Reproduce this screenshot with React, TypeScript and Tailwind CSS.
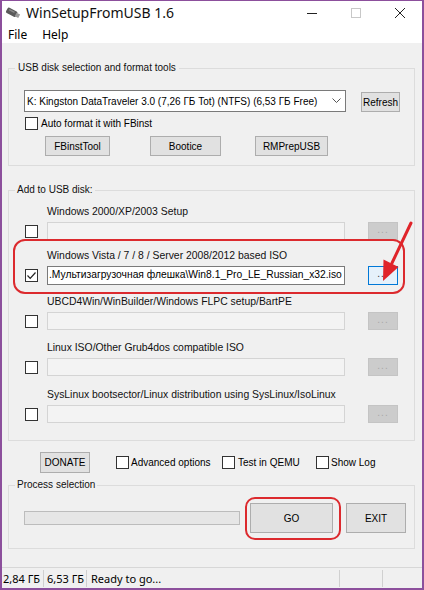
import React from "react";

const ui = { fontFamily: '"Liberation Sans", Arial, sans-serif' };
const seg = { fontFamily: '"Noto Sans", "Open Sans", sans-serif' };

function Check({ checked = false }: { checked?: boolean }) {
  return (
    <span className="flex h-[13px] w-[13px] shrink-0 items-center justify-center border border-[#333333] bg-white">
      {checked && (
        <svg width="11" height="11" viewBox="0 0 11 11">
          <path d="M1.5 5.5 L4.2 8.3 L9.5 2.5" fill="none" stroke="#222" strokeWidth="1.2" />
        </svg>
      )}
    </span>
  );
}

function Btn({ w, h = 20, children }: { w: number; h?: number; children: React.ReactNode }) {
  return (
    <div
      className="flex shrink-0 items-center justify-center border border-[#adadad] bg-[#e1e1e1] text-[10px] text-black"
      style={{ width: w, height: h }}
    >
      {children}
    </div>
  );
}

const rows = [
  { label: "Windows 2000/XP/2003 Setup", mt: "mt-[8px]" },
  {
    label: "Windows Vista / 7 / 8 / Server 2008/2012 based ISO",
    mt: "mt-[9px]",
    value: ".Мультизагрузочная флешка\\Win8.1_Pro_LE_Russian_x32.iso",
  },
  { label: "UBCD4Win/WinBuilder/Windows FLPC setup/BartPE", mt: "mt-[11px]" },
  { label: "Linux ISO/Other Grub4dos compatible ISO", mt: "mt-[11px]" },
  { label: "SysLinux bootsector/Linux distribution using SysLinux/IsoLinux", mt: "mt-[12px]" },
];

export default function App() {
  return (
    <div
      className="flex h-[590px] w-[424px] flex-col border-x-2 border-t border-b-2 border-[#8c4f9c] bg-[#f0f0f0] text-black"
      style={ui}
    >
      {/* title bar */}
      <div className="flex h-[24px] items-center bg-white">
        <svg width="16" height="12" viewBox="0 0 16 12" className="ml-[3px]">
          <g transform="rotate(28 8 6)">
            <rect x="1" y="3" width="11" height="6" rx="1.5" fill="#5a5a5a" />
            <rect x="11" y="4" width="4" height="4" fill="#9a9a9a" />
            <rect x="3" y="4" width="6" height="1.5" fill="#8a8a8a" />
          </g>
        </svg>
        <span className="ml-[5px] text-[14px] leading-none text-[#111]" style={seg}>
          WinSetupFromUSB 1.6
        </span>
        <div className="ml-auto flex h-full items-center">
          <div className="flex w-[44px] justify-center">
            <div className="h-px w-[10px] bg-[#222]" />
          </div>
          <div className="flex w-[44px] justify-center">
            <div className="h-[10px] w-[10px] border border-[#c8c8c8]" />
          </div>
          <div className="flex w-[44px] justify-center">
            <svg width="12" height="12" viewBox="0 0 12 12">
              <path d="M1 1 L11 11 M11 1 L1 11" stroke="#222" strokeWidth="1" />
            </svg>
          </div>
        </div>
      </div>

      {/* menu */}
      <div className="flex h-[18px] items-center gap-[15px] bg-white pl-[6px] pt-[2px] text-[12px] leading-none" style={seg}>
        <span>File</span>
        <span>Help</span>
      </div>

      {/* body */}
      <div className="flex flex-1 flex-col pl-[6px] text-[10px]">
        <fieldset className="mt-[18px] w-[407px] border border-[#dcdcdc] pb-[9px]">
          <legend className="ml-[6px] h-[14px] px-[3px] leading-[14px] text-[#111]">
            USB disk selection and format tools
          </legend>
          <div className="mt-[15px] flex items-start">
            <div className="ml-[15px] flex h-[22px] w-[322px] items-center border border-[#7a7a7a] bg-white pl-[2px]">
              <span className="whitespace-nowrap">K: Kingston DataTraveler 3.0 (7,26 ГБ Tot) (NTFS) (6,53 ГБ Free)</span>
              <svg width="9" height="6" viewBox="0 0 9 6" className="ml-auto mr-[4px]">
                <path d="M0.5 0.5 L4.5 4.5 L8.5 0.5" fill="none" stroke="#555" strokeWidth="1" />
              </svg>
            </div>
            <div className="ml-[15px] mt-[2px]">
              <Btn w={39}>Refresh</Btn>
            </div>
          </div>
          <div className="mt-[5px] flex h-[13px] items-center">
            <div className="ml-[16px]">
              <Check />
            </div>
            <span className="ml-[3px]">Auto format it with FBinst</span>
          </div>
          <div className="mt-[6px] flex">
            <div className="ml-[36px]">
              <Btn w={65}>FBinstTool</Btn>
            </div>
            <div className="ml-[40px]">
              <Btn w={71}>Bootice</Btn>
            </div>
            <div className="ml-[34px]">
              <Btn w={73}>RMPrepUSB</Btn>
            </div>
          </div>
        </fieldset>

        <fieldset className="relative mt-[17px] w-[407px] border border-[#dcdcdc] pb-[17px]">
          <legend className="ml-[6px] h-[14px] px-[2px] leading-[14px] text-[#111]">Add to USB disk:</legend>
          {rows.map((r, i) => (
            <div key={i} className={`flex flex-col ${r.mt}`}>
              <div className="ml-[38px] h-[14px] whitespace-nowrap text-[10.4px] leading-[14px] text-[#111]">{r.label}</div>
              <div className="mt-[3px] flex h-[18px] items-center">
                <div className="ml-[16px]">
                  <Check checked={!!r.value} />
                </div>
                {r.value ? (
                  <div className="ml-[9px] flex h-[19px] w-[298px] items-center overflow-hidden whitespace-nowrap border border-[#7a7a7a] bg-white pl-[1px] text-[10.3px]">
                    {r.value}
                  </div>
                ) : (
                  <div className="ml-[9px] h-[18px] w-[298px] border border-[#d4d4d4] bg-[#f3f3f3]" />
                )}
                {r.value ? (
                  <div className="ml-[23px] flex h-[19px] w-[30px] items-center justify-center border border-[#0078d7] bg-[#e5f1fb] pb-[3px] text-[10px] tracking-[1px] text-[#333]">
                    ...
                  </div>
                ) : (
                  <div className="ml-[23px] flex h-[18px] w-[30px] items-center justify-center border border-[#c4c4c4] bg-[#cccccc] pb-[3px] text-[10px] tracking-[1px] text-[#a8a8a8]">
                    ...
                  </div>
                )}
              </div>
            </div>
          ))}
          {/* red annotation around row 2 */}
          <div className="pointer-events-none absolute left-[4px] top-[42px] h-[55px] w-[392px] rounded-[12px] border-2 border-[#dc2a2e]" />
        </fieldset>

        <div className="mt-[11px] flex h-[21px] items-center">
          <div className="ml-[32px]">
            <Btn w={50} h={21}>
              DONATE
            </Btn>
          </div>
          <div className="ml-[26px] flex w-[106px] items-center">
            <Check />
            <span className="ml-[2px]">Advanced options</span>
          </div>
          <div className="flex w-[94px] items-center">
            <Check />
            <span className="ml-[3px]">Test in QEMU</span>
          </div>
          <div className="flex items-center">
            <Check />
            <span className="ml-[2px]">Show Log</span>
          </div>
        </div>

        <fieldset className="relative mt-[5px] w-[407px] border border-[#dcdcdc] pb-[15px]">
          <legend className="ml-[6px] h-[14px] px-[2px] leading-[14px] text-[#111]">Process selection</legend>
          <div className="mt-[11px] flex items-center">
            <div className="ml-[15px] h-[14px] w-[216px] border border-[#bcbcbc] bg-[#e6e6e6]" />
            <div className="ml-[10px]">
              <Btn w={83} h={30}>
                GO
              </Btn>
            </div>
            <div className="ml-[13px]">
              <Btn w={60} h={30}>
                EXIT
              </Btn>
            </div>
          </div>
          <div className="pointer-events-none absolute left-[236px] top-[5px] h-[43px] w-[96px] rounded-[10px] border-2 border-[#dc2a2e]" />
        </fieldset>
      </div>

      {/* status bar */}
      <div className="flex h-[21px] items-center whitespace-nowrap border-t border-[#d7d7d7] text-[11px] leading-none" style={seg}>
        <div className="flex h-full w-[41px] items-center pl-[1px]">2,84 ГБ</div>
        <div className="h-[17px] w-px bg-[#d0d0d0]" />
        <div className="flex h-full w-[42px] items-center pl-[3px]">6,53 ГБ</div>
        <div className="h-[17px] w-px bg-[#d0d0d0]" />
        <div className="flex h-full w-[252px] items-center pl-[4px]">Ready to go...</div>
        <div className="h-[17px] w-px bg-[#d0d0d0]" />
        <div className="w-[42px]" />
        <div className="h-[17px] w-px bg-[#d0d0d0]" />
      </div>

      {/* red arrow pointing at the browse button */}
      <svg
        className="pointer-events-none absolute left-0 top-0"
        width="424"
        height="590"
        viewBox="0 0 424 590"
      >
        <line x1="411" y1="223" x2="392" y2="263" stroke="#e0242a" strokeWidth="3" strokeLinecap="round" />
        <polygon points="383,281 383.5,259.5 398.5,267" fill="#e0242a" />
      </svg>
    </div>
  );
}
